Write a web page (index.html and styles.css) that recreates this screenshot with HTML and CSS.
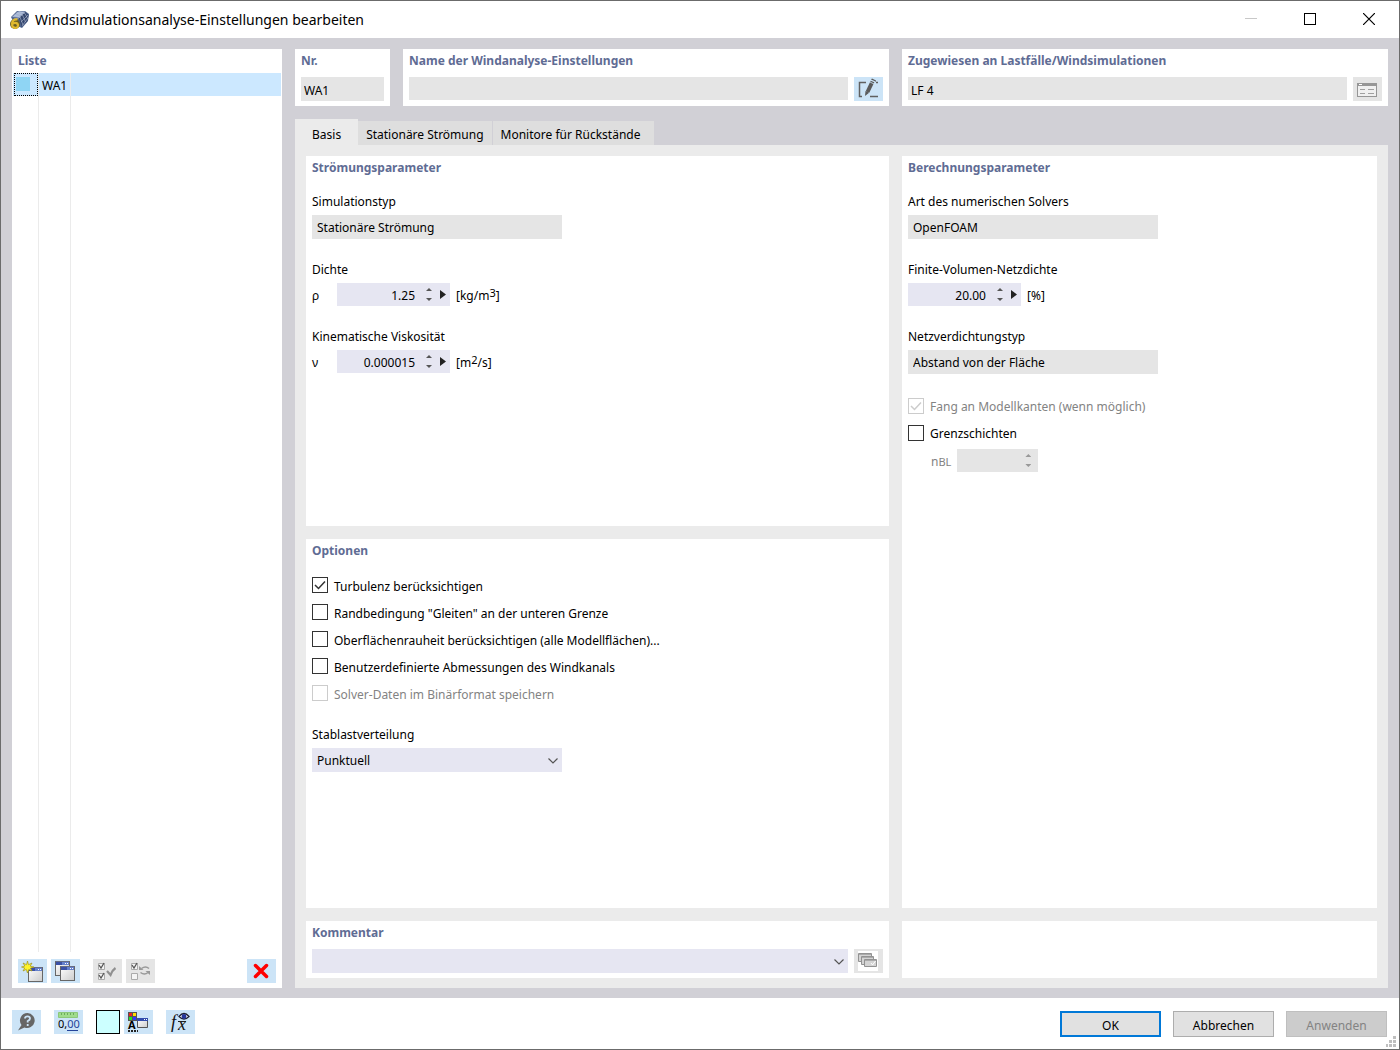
FILE: index.html
```html
<!DOCTYPE html>
<html lang="de">
<head>
<meta charset="utf-8">
<meta name="viewport" content="width=device-width, initial-scale=1">
<title>Windsimulationsanalyse-Einstellungen bearbeiten</title>
<link rel="stylesheet" href="styles.css">
</head>
<body>
<svg class="defs" aria-hidden="true">
  <defs>
    <linearGradient id="pane" x1="0" y1="0" x2="1" y2="1"><stop offset="0" stop-color="#fff"/><stop offset="1" stop-color="#ccc"/></linearGradient>
    <symbol id="win" viewBox="0 0 15 15">
      <rect x="0.5" y="0.5" width="14" height="14" fill="url(#pane)" stroke="#666"/>
      <path d="M1 2.500h13" stroke="#3a50a6" stroke-width="3"/>
      <path d="M7 2.500h7" stroke="#6480cc" stroke-width="3"/>
      <path d="M0.500 .5h14" stroke="#666c84"/>
      <path d="M10 2.500h1M12 2.500h1" stroke="#fff"/>
    </symbol>
  </defs>
</svg>
<div class="dialog">
  <header class="titlebar">
    <svg class="app-icon" width="20" height="20" viewBox="0 0 20 20" aria-hidden="true">
      <path d="M1 7 7 1l8 0 4 3-1 7-6 7-7-3z" fill="#50658f"/>
      <path d="M2 7 8 1.500l7 0-6 6z" fill="#a3b4d3"/>
      <path d="M9 8l6-6 3.500 3-1 6-6 6z" fill="#34466e"/>
      <path d="M4 5l6 2 3 8M6.500 3l6 2 3 7M9 1.500l6 2 2.500 5M4 9l5-1 6-6M11 12l7-7M12 16l6-8" stroke="#c4cee2" stroke-width=".5" fill="none"/>
      <circle cx="5" cy="14" r="5" fill="#6b5f24"/>
      <path d="M7.500 9.500C4 8.800 2 11 2 14c0 5 6 5 6 1.500 0-3.500-5-3.500-6-.5" fill="none" stroke="#e0b92e" stroke-width="2.200"/>
    </svg>
    <h1 class="title">Windsimulationsanalyse-Einstellungen bearbeiten</h1>
    <div class="window-buttons">
      <button class="window-button" type="button" aria-label="Minimieren" disabled><svg width="12" height="12" viewBox="0 0 12 12"><path d="M0 5.500h12" stroke="#c8c8c8"/></svg></button>
      <button class="window-button" type="button" aria-label="Maximieren"><svg width="12" height="12" viewBox="0 0 12 12"><rect x=".5" y=".5" width="11" height="11" fill="none" stroke="#000"/></svg></button>
      <button class="window-button" type="button" aria-label="Schließen"><svg width="12" height="12" viewBox="0 0 12 12"><path d="M0 0 12 12M12 0 0 12" stroke="#000" stroke-width="1.200"/></svg></button>
    </div>
  </header>

  <main class="workspace">
    <aside class="panel list-panel">
      <h2 class="heading">Liste</h2>
      <div class="list">
        <table class="list-table">
          <tr class="selected"><td class="swatch-cell"><span class="swatch"></span></td><td class="id-cell">WA1</td><td></td></tr>
        </table>
      </div>
      <div class="list-tools">
        <button class="tool" type="button" aria-label="Neu"><svg width="29" height="24" viewBox="0 0 29 24">
          <use href="#win" x="10" y="8" width="15" height="15"/>
          <path d="M9.500 2l1 3.700L14 4l-1.800 3.200L16 8l-3.600 1.200L14 12l-3.200-1.500L9.500 14l-1.200-3.600L5 12l1.700-3L3.500 8l3.400-1L5 4l3.500 1.700z" fill="#fff42a" stroke="#a09420" stroke-width=".7"/></svg></button>
        <button class="tool" type="button" aria-label="Kopieren"><svg width="29" height="24" viewBox="0 0 29 24"><use href="#win" x="4" y="2" width="15" height="15"/><use href="#win" x="9" y="7" width="15" height="15"/></svg></button>
        <button class="tool tool-spaced" type="button" aria-label="Alle auswählen" disabled><svg width="29" height="24" viewBox="0 0 29 24" fill="none">
          <path d="M5.500 4.500h6v6h-6zM5.500 14.500h6v6h-6z" fill="#f4f4f4" stroke="#aaa"/><path d="M6 6l2 3 3-5M6 16l2 3 3-5" stroke="#555" stroke-width="1.300"/><path d="M14 12l3.500 4q2-5 5-7" stroke="#909090" stroke-width="2.200"/></svg></button>
        <button class="tool" type="button" aria-label="Auswahl umkehren" disabled><svg width="29" height="24" viewBox="0 0 29 24" fill="none">
          <path d="M5.500 4.500h6v6h-6zM5.500 14.500h6v6h-6z" fill="#f4f4f4" stroke="#aaa"/><path d="M6 6l2 3 3-5" stroke="#555" stroke-width="1.300"/><path d="M15.500 9.500q4-3 7.500 0M14.500 13.500q4 3 7.500 0" stroke="#999" stroke-width="1.500"/><path d="M13 7v4h4.500zM24 16v-4h-4.500z" fill="#999"/></svg></button>
        <button class="tool tool-end" type="button" aria-label="Löschen"><svg width="29" height="24" viewBox="0 0 29 24"><path d="M8.500 6.500l11 11M19.500 6.500l-11 11" stroke="#f00" stroke-width="3.500" stroke-linecap="round"/></svg></button>
      </div>
    </aside>

    <div class="content">
      <div class="top-row">
        <section class="panel number-panel">
          <h2 class="heading"><label for="nr">Nr.</label></h2>
          <div class="field-row"><input class="field" id="nr" value="WA1" readonly></div>
        </section>
        <section class="panel">
          <h2 class="heading"><label for="name">Name der Windanalyse-Einstellungen</label></h2>
          <div class="field-row"><input class="field short" id="name" readonly>
            <button class="tool" type="button" aria-label="Name bearbeiten"><svg width="29" height="24" viewBox="0 0 29 24" fill="none">
              <path d="M12 5.500H5.500v14H8M16 19.500h8M22 5.500h2" stroke="#606060" stroke-width="1.500"/><path d="M18.500 4.500l-5 10.500" stroke="#5a5a5a" stroke-width="4"/><path d="M11.500 14l3.600 1.700L11 19zM17 2.500l1-1 4 2 0 1.200z" fill="#5a5a5a"/><path d="M16 5l4 2" stroke="#cce4f7" stroke-width=".8"/></svg></button></div>
        </section>
        <section class="panel">
          <h2 class="heading"><label for="assigned">Zugewiesen an Lastfälle/Windsimulationen</label></h2>
          <div class="field-row"><input class="field short" id="assigned" value="LF 4" readonly>
            <button class="tool" type="button" aria-label="Zuweisung" disabled><svg width="29" height="24" viewBox="0 0 29 24" fill="none">
              <rect x="4.500" y="6.500" width="19" height="13" fill="#f0f0f0" stroke="#969696"/><path d="M4 7.500h20" stroke="#969696" stroke-width="3"/><path d="M6 7.500h3" stroke="#fff"/><path d="M7 12.500h5M15 12.500h6M7 16.500h5M15 16.500h6" stroke="#a0a0a0"/></svg></button></div>
        </section>
      </div>

      <div class="tabs" role="tablist">
        <button class="tab active" type="button" role="tab" aria-selected="true">Basis</button>
        <button class="tab" type="button" role="tab">Stationäre Strömung</button>
        <button class="tab" type="button" role="tab">Monitore für Rückstände</button>
      </div>

      <div class="page">
        <div class="column">
          <section class="panel grow">
            <h2 class="heading">Strömungsparameter</h2>
            <div class="groups">
              <div class="group"><label class="caption" for="simtype">Simulationstyp</label>
                <select class="field choice" id="simtype" disabled><option>Stationäre Strömung</option></select></div>
              <div class="group"><label class="caption" for="density">Dichte</label>
                <div class="value-row"><span class="symbol">ρ</span>
                  <div class="spin"><input class="spin-input" id="density" value="1.25"><span class="steps"><button class="step up" type="button" aria-label="Mehr"></button><button class="step down" type="button" aria-label="Weniger"></button></span><button class="more" type="button" aria-label="Weitere Werte"></button></div>
                  <span class="unit">[kg/m<sup>3</sup>]</span></div></div>
              <div class="group"><label class="caption" for="viscosity">Kinematische Viskosität</label>
                <div class="value-row"><span class="symbol">ν</span>
                  <div class="spin"><input class="spin-input" id="viscosity" value="0.000015"><span class="steps"><button class="step up" type="button" aria-label="Mehr"></button><button class="step down" type="button" aria-label="Weniger"></button></span><button class="more" type="button" aria-label="Weitere Werte"></button></div>
                  <span class="unit">[m<sup>2</sup>/s]</span></div></div>
            </div>
          </section>
          <section class="panel grow">
            <h2 class="heading">Optionen</h2>
            <div class="checks options">
              <label class="check"><input type="checkbox" checked><span>Turbulenz berücksichtigen</span></label>
              <label class="check"><input type="checkbox"><span>Randbedingung "Gleiten" an der unteren Grenze</span></label>
              <label class="check"><input type="checkbox"><span>Oberflächenrauheit berücksichtigen (alle Modellflächen)...</span></label>
              <label class="check"><input type="checkbox"><span>Benutzerdefinierte Abmessungen des Windkanals</span></label>
              <label class="check"><input type="checkbox" disabled><span>Solver-Daten im Binärformat speichern</span></label>
            </div>
            <div class="group distribution"><label class="caption" for="distribution">Stablastverteilung</label>
              <select class="field choice editable" id="distribution"><option>Punktuell</option></select></div>
          </section>
          <section class="panel">
            <h2 class="heading"><label for="comment">Kommentar</label></h2>
            <div class="field-row"><select class="field editable" id="comment"><option></option></select>
              <button class="tool" type="button" aria-label="Kommentare" disabled><svg width="29" height="24" viewBox="0 0 29 24" fill="#d4d4d4" stroke="#929292">
                <path d="M4 2h20v20H4z" fill="#fff" stroke="none"/><path d="M4.500 4.500h13v8h-13z"/><path d="M7.500 7.500h12v8h-12z"/><path d="M10.500 10.500h12v7h-12z"/><path d="M5 5.500h12M8 8.500h11M11 11.500h11" stroke="#aaa"/><path d="M17 14l1.500 2 3-4" stroke="#fff" fill="none"/></svg></button></div>
          </section>
        </div>
        <div class="column">
          <section class="panel grow">
            <h2 class="heading">Berechnungsparameter</h2>
            <div class="groups">
              <div class="group"><label class="caption" for="solver">Art des numerischen Solvers</label>
                <select class="field choice" id="solver" disabled><option>OpenFOAM</option></select></div>
              <div class="group"><label class="caption" for="mesh">Finite-Volumen-Netzdichte</label>
                <div class="value-row">
                  <div class="spin"><input class="spin-input" id="mesh" value="20.00"><span class="steps"><button class="step up" type="button" aria-label="Mehr"></button><button class="step down" type="button" aria-label="Weniger"></button></span><button class="more" type="button" aria-label="Weitere Werte"></button></div>
                  <span class="unit">[%]</span></div></div>
              <div class="group"><label class="caption" for="refine">Netzverdichtungstyp</label>
                <select class="field choice" id="refine" disabled><option>Abstand von der Fläche</option></select></div>
            </div>
            <div class="checks snapping">
              <label class="check"><input type="checkbox" checked disabled><span>Fang an Modellkanten (wenn möglich)</span></label>
              <label class="check"><input type="checkbox"><span>Grenzschichten</span></label>
            </div>
            <div class="layers"><label class="unit" for="nbl">n<small>BL</small></label>
              <div class="spin off"><input class="spin-input" id="nbl" disabled><span class="steps"><button class="step up" type="button" aria-label="Mehr" disabled></button><button class="step down" type="button" aria-label="Weniger" disabled></button></span></div></div>
          </section>
          <section class="panel blank"></section>
        </div>
      </div>
    </div>
  </main>

  <footer class="footer">
    <button class="tool" type="button" aria-label="Hilfe"><svg width="29" height="24" viewBox="0 0 29 24"><path d="M15.500 3a7.500 7.500 0 1 1-3 14.500Q9 19 6 20.500L9.500 15A7.500 7.500 0 0 1 15.500 3z" fill="#666"/><path d="M13 8.500q0-2.200 2.500-2.200T18 8.500q0 1.500-2.300 2.500v1.500M15.700 14v2" fill="none" stroke="#cce4f7" stroke-width="1.800"/></svg></button>
    <button class="tool" type="button" aria-label="Einheiten und Dezimalstellen"><svg width="29" height="24" viewBox="0 0 29 24">
      <path d="M4.500 2.500h19v5h-19z" fill="#a0dc8c" stroke="#8cc87a"/><path d="M7.500 3v2M10.500 3v2M13.500 3v2M16.500 3v2M19.500 3v2" stroke="#6cac5c"/>
      <text class="digits" x="4" y="18">0,<tspan fill="#24449a">00</tspan></text><path d="M13 20.500h11" stroke="#24449a"/></svg></button>
    <button class="color-button" type="button" aria-label="Farbe"></button>
    <button class="tool tool-near" type="button" aria-label="Darstellung"><svg width="29" height="24" viewBox="0 0 29 24">
      <path d="M4 2h9v9H4z" fill="#555"/><path d="M5 3h3v3H5z" fill="#e22"/><path d="M9 3h3v3H9z" fill="#fd0"/><path d="M5 7h3v3H5z" fill="#2d2"/><path d="M9 7h3v3H9z" fill="#33f"/>
      <text class="letter" x="4" y="19">A</text><path d="M4 21h10" stroke="#222" stroke-width="2" stroke-dasharray="2 1"/>
      <path d="M13.500 8.500h10v9h-10z" fill="url(#pane)" stroke="#555"/><path d="M13 9.500h11" stroke="#324cac" stroke-width="3"/><path d="M20 9.500h1M22 9.500h1" stroke="#fff"/></svg></button>
    <button class="tool" type="button" aria-label="Formeln"><svg width="29" height="24" viewBox="0 0 29 24">
      <text class="formula" x="5" y="18">f</text><text class="formula" x="12" y="20">x</text><path d="M12 11.500h8" stroke="#222"/>
      <path d="M13 6.500q5-6 10 0-5 5-10 0z" fill="#fff" stroke="#223" stroke-width="1.300"/><circle cx="18" cy="6.500" r="2.400" fill="#26359a"/></svg></button>
    <div class="actions">
      <button class="action primary" type="button">OK</button>
      <button class="action" type="button">Abbrechen</button>
      <button class="action" type="button" disabled>Anwenden</button>
    </div>
    <svg class="grip" width="10" height="11" viewBox="0 0 10 11" aria-hidden="true"><path d="M7 0h3v3H7zM3 4h3v3H3zM7 4h3v3H7zM0 8h2v3H0zM3 8h3v3H3zM7 8h3v3H7z" fill="#bfbfbf"/></svg>
  </footer>
</div>
</body>
</html>
```
FILE: styles.css
```css
* { box-sizing: border-box; }

body {
  margin: 0;
  color: #000;
  background: #fff;
  font: 12px/20px "Noto Sans", "Open Sans", sans-serif;
}

button, input, select { font: inherit; color: inherit; }
button { padding: 0; border: 0; background: none; }
svg { display: block; flex: none; }
.defs { position: absolute; width: 0; height: 0; }

.dialog {
  display: flex;
  flex-direction: column;
  min-height: 100vh;
  border: 1px solid #6b6b6b;
}

/* Title bar */
.titlebar { display: flex; align-items: center; height: 37px; padding-left: 9px; gap: 5px; }
.title { margin: 0; font-size: 14px; font-weight: 400; }
.window-buttons { display: flex; margin: 0 1px 0 auto; }
.window-button { display: grid; place-items: center; width: 59px; height: 36px; padding-bottom: 2px; }

/* Main area */
.workspace {
  flex: 1;
  display: grid;
  grid-template-columns: 270px 1fr;
  gap: 13px;
  padding: 11px 11px 10px;
  background: #d1d0d6;
}
.content { display: flex; flex-direction: column; min-width: 0; }

.panel { padding: 0 6px 5px; background: #fff; }
.heading { margin: 0; color: #5f6c94; font-size: 12px; font-weight: 700; line-height: 24px; }

/* List */
.list-panel { display: flex; flex-direction: column; }
.list {
  flex: 1;
  margin: 0 -5px 7px;
  background: linear-gradient(#ebebeb, #ebebeb) 25px 0 / 1px 100% no-repeat,
    linear-gradient(#ebebeb, #ebebeb) 57px 0 / 1px 100% no-repeat;
}
.list-table { width: 100%; border-spacing: 0; table-layout: fixed; }
.list-table td { height: 23px; padding: 0; border-right: 1px solid #ebebeb; }
.list-table td:last-child { border-right: 0; }
.selected { background: #cce8ff; }
.list-table .swatch-cell { width: 26px; padding-left: 1px; }
.list-table .id-cell { width: 32px; padding: 2px 0 0 3px; }
.swatch { display: block; width: 24px; height: 23px; border: 1px dotted #000; background: linear-gradient(#8fd5f4, #8fd5f4) 1px 3px / 14px 14px no-repeat; }
.list-tools { display: flex; gap: 4px; }
.tool { flex: none; width: 29px; height: 24px; background: #cce4f7; }
.tool:disabled { background: #e5e5e5; }
.tool-spaced { margin-left: 9px; }
.tool-end { margin-left: auto; }

/* Fields */
.field-row { display: flex; gap: 6px; margin-top: 4px; }
.field {
  flex: 1;
  min-width: 0;
  height: 24px;
  padding: 2px 5px 0;
  border: 0;
  border-radius: 0;
  color: #000;
  background: #e5e5e5;
  appearance: none;
  opacity: 1;
}
.field-row .field { padding: 2px 3px 0; }
.field-row .short { height: 23px; padding-top: 3px; }
.choice { flex: none; width: 250px; }
.editable {
  background: #e6e6f2 url("data:image/svg+xml,%3Csvg xmlns='http://www.w3.org/2000/svg' width='10' height='6'%3E%3Cpath d='M.5.5 5 5 9.500.5' fill='none' stroke='%23555' stroke-width='1.200'/%3E%3C/svg%3E") right 4px top 10px no-repeat;
}

/* Top row */
.top-row { display: grid; grid-template-columns: 95px 1fr 1fr; gap: 13px; }

/* Tabs */
.tabs { display: flex; align-items: flex-end; height: 26px; margin-top: 13px; }
.tab { height: 24px; padding: 3px 8px 0; border-right: 1px solid #d1d0d6; background: #dedede; }
.tab:last-child { padding-right: 14px; }
.tab.active { height: 26px; padding: 5px 17px 0; border: 0; background: #ebebeb; }

.page {
  flex: 1;
  display: grid;
  grid-template-columns: 583fr 475fr;
  gap: 13px;
  padding: 11px 11px 10px;
  background: #ebebeb;
}
.column { display: flex; flex-direction: column; gap: 13px; min-width: 0; }
.grow { flex: 1; }
.blank { height: 57px; }

.groups { display: flex; flex-direction: column; gap: 19px; margin-top: 10px; }
.group { display: flex; flex-direction: column; align-items: flex-start; gap: 1px; }
.caption { line-height: 24px; }
.value-row { display: flex; align-items: center; gap: 6px; height: 23px; }
.symbol { width: 19px; padding-top: 2px; }
.unit { padding-top: 2px; }
sup { font-size: 11px; line-height: 0; vertical-align: 3px; }

.spin { display: flex; align-items: center; width: 113px; height: 23px; background: #e6e6f2; }
.spin-input { flex: 1; min-width: 0; height: 23px; padding: 2px 9px 0 0; border: 0; background: none; text-align: right; }
.steps { display: flex; flex-direction: column; justify-content: space-between; width: 10px; height: 13px; align-items: center; }
.step { width: 6px; height: 3px; background: #555; }
.up { clip-path: polygon(50% 0, 100% 100%, 0 100%); }
.down { clip-path: polygon(0 0, 100% 0, 50% 100%); }
.more { width: 6px; height: 9px; margin: 0 4px 0 6px; background: #222; clip-path: polygon(0 0, 100% 50%, 0 100%); }
.off { width: 81px; padding-right: 5px; background: #e5e5e5; }
.off .step { background: #999; }

/* Tick boxes */
.checks { display: flex; flex-direction: column; align-items: flex-start; }
.options { margin-top: 9px; }
.snapping { margin-top: 18px; }
.check { display: flex; align-items: center; gap: 6px; height: 27px; }
.check span { padding-top: 3px; }
.check input {
  width: 16px;
  height: 16px;
  margin: 0;
  border: 1px solid #333;
  background: #fff center no-repeat;
  appearance: none;
}
.check input:checked { background-image: url("data:image/svg+xml,%3Csvg xmlns='http://www.w3.org/2000/svg' width='12' height='10'%3E%3Cpath d='M1 5l3.500 3.500L11 1.500' fill='none' stroke='%23333' stroke-width='1.500'/%3E%3C/svg%3E"); }
.check input:disabled { border-color: #ccc; }
.check input:checked:disabled { background-image: url("data:image/svg+xml,%3Csvg xmlns='http://www.w3.org/2000/svg' width='12' height='10'%3E%3Cpath d='M1 5l3.500 3.500L11 1.500' fill='none' stroke='%23ccc' stroke-width='1.500'/%3E%3C/svg%3E"); }
.check input:disabled + span { color: #838383; }
.distribution { margin-top: 16px; }
.layers { display: flex; align-items: center; gap: 6px; margin: 3px 0 0 23px; color: #838383; }
.layers small { font-size: 11px; }

/* Footer */
.footer { position: relative; display: flex; align-items: flex-start; gap: 13px; height: 51px; padding: 12px 12px 0 11px; }
.color-button { width: 24px; height: 24px; border: 1px solid #000; background: #cff; }
.tool-near { margin-left: -9px; }
.actions { display: flex; gap: 12px; margin: 1px 0 0 auto; }
.action { width: 101px; height: 26px; padding-top: 3px; border: 1px solid #adadad; background: #e1e1e1; }
.action.primary { border: 2px solid #0078d7; }
.action:disabled { color: #838383; border-color: #bfbfbf; background: #ccc; }
.grip { position: absolute; right: 3px; bottom: 2px; }

.digits { font: 11px "Noto Sans", sans-serif; }
.letter { font: bold 11px "Noto Sans", sans-serif; }
.formula { font: italic 18px "Liberation Serif", serif; fill: #111; }
```
